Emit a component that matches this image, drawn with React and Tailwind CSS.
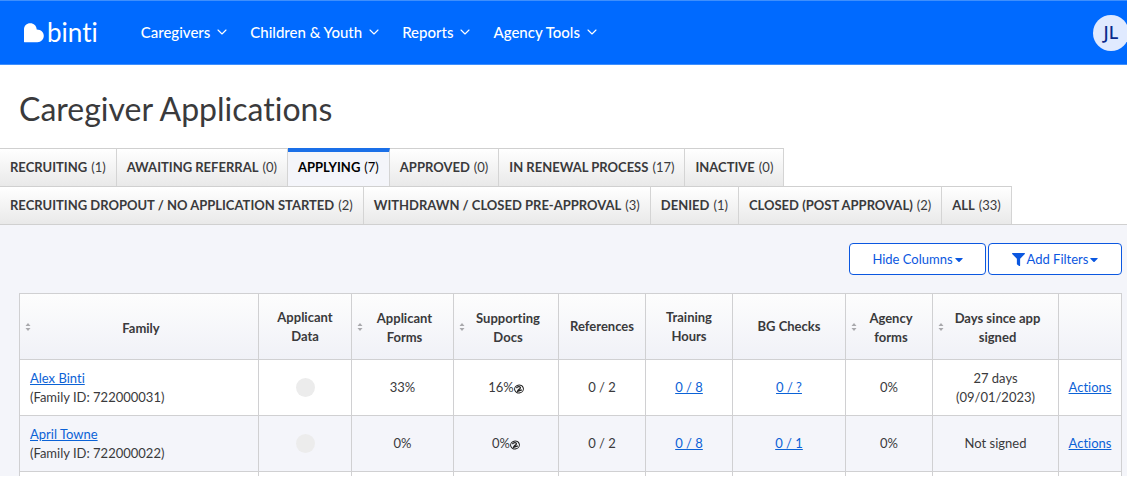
import { FaFilter, FaCaretDown } from 'react-icons/fa';

const navItems = ['Caregivers', 'Children & Youth', 'Reports', 'Agency Tools'];

const tabRows = [
  [
    { label: 'Recruiting', count: 1 },
    { label: 'Awaiting Referral', count: 0 },
    { label: 'Applying', count: 7, active: true },
    { label: 'Approved', count: 0 },
    { label: 'In Renewal Process', count: 17 },
    { label: 'Inactive', count: 0 },
  ],
  [
    { label: 'Recruiting Dropout / No Application Started', count: 2 },
    { label: 'Withdrawn / Closed Pre-Approval', count: 3 },
    { label: 'Denied', count: 1 },
    { label: 'Closed (Post Approval)', count: 2 },
    { label: 'All', count: 33 },
  ],
];

const columns = [
  { label: 'Family', width: 'w-auto', sortable: true },
  { label: 'Applicant Data', width: 'w-[93px]' },
  { label: 'Applicant Forms', width: 'w-[102px]', sortable: true },
  { label: 'Supporting Docs', width: 'w-[105px]', sortable: true },
  { label: 'References', width: 'w-[87px]' },
  { label: 'Training Hours', width: 'w-[87px]' },
  { label: 'BG Checks', width: 'w-[113px]' },
  { label: 'Agency forms', width: 'w-[87px]', sortable: true },
  { label: 'Days since app signed', width: 'w-[126px]', sortable: true },
  { label: '', width: 'w-[63px]' },
];

const families = [
  {
    id: '722000031',
    name: 'Alex Binti',
    forms: '33%',
    docs: '16%',
    references: '0 / 2',
    training: '0 / 8',
    checks: '0 / ?',
    agency: '0%',
    signed: ['27 days', '(09/01/2023)'],
  },
  {
    id: '722000022',
    name: 'April Towne',
    forms: '0%',
    docs: '0%',
    references: '0 / 2',
    training: '0 / 8',
    checks: '0 / 1',
    agency: '0%',
    signed: ['Not signed'],
  },
];

const Chevron = () => (
  <svg className="h-[6px] w-[10px]" viewBox="0 0 10 6" fill="none" stroke="currentColor" strokeWidth="1.1">
    <path d="M1 1L5 5L9 1" strokeLinecap="round" strokeLinejoin="round" />
  </svg>
);

const SortIcon = () => (
  <svg className="h-2 w-[6px] shrink-0 text-[#a9a9ad]" viewBox="0 0 6 8" fill="currentColor">
    <path d="M3 0L5.5 3H0.5Z M0.5 5H5.5L3 8Z" />
  </svg>
);

// Circled question mark lying on its side
const HelpIcon = () => (
  <svg className="mt-0.5 h-[10px] w-[10px] text-[#222]" viewBox="0 0 10 10" fill="none" stroke="currentColor">
    <ellipse cx="5" cy="5" rx="4.4" ry="3.9" strokeWidth="1" transform="rotate(-15 5 5)" />
    <path d="M2.4 4.2C3.6 2.4 6.6 2.2 6.4 3.8C6.2 5 4.4 5.2 3.4 7.4L7.8 5.8" strokeWidth="1.3" />
  </svg>
);

const Link = ({ children }) => (
  <a href="#" className="text-[#0b62d6] underline">
    {children}
  </a>
);

const Header = () => (
  <header className="flex h-[65px] shrink-0 items-center overflow-hidden border-y border-[#3f8ffc] bg-[#006aff] pl-6 text-white">
    <a href="#" className="flex items-center gap-[3px]">
      <svg className="h-5 w-5" viewBox="0 0 20 20" fill="currentColor">
        <path d="M0 19V6.5C0 2.8 2.7 0.3 6.2 0.3C9.8 0.3 12.5 2.8 12.7 6.4C16.7 6.3 19.8 9.1 19.8 12.8C19.8 16.4 17.2 19.2 13.4 19.2H0.5Z" />
      </svg>
      <span className="pb-0.5 text-[26px] leading-6">binti</span>
    </a>
    <nav className="ml-[43px] flex items-center gap-[23px]">
      {navItems.map((item) => (
        <button key={item} className="flex items-center gap-[7px] pb-0.5 text-[15px] leading-5 font-medium">
          {item}
          <Chevron />
        </button>
      ))}
    </nav>
    <button className="-mr-0.5 ml-auto h-9 w-9 shrink-0 rounded-full bg-[#e0eaff] pb-0.5 font-['Noto_Sans'] text-lg font-medium text-[#0a2a8c]">
      JL
    </button>
  </header>
);

const Tab = ({ label, count, active }) => (
  <a
    href="#"
    className={`flex h-[38px] items-center border-r border-r-[#d4d4d4] px-[10px] whitespace-nowrap ${
      active
        ? 'border-t-4 border-t-[#1a6fe8] bg-[#f4f5fa] pb-1 text-black'
        : 'border-t border-t-[#d0d0d0] bg-linear-to-b from-white to-[#e9e9e9] text-[#3a3a3c]'
    }`}
  >
    <span className="font-bold uppercase">{label}</span>
    <span className="ml-1">({count})</span>
  </a>
);

const App = () => {
  return (
    <div className="flex h-screen flex-col overflow-hidden border-b border-white bg-white font-['Lato',sans-serif] text-[13px] leading-[19px] text-[#3a3a3c] [font-variant-ligatures:none]">
      <Header />
      <h1 className="px-[19px] pt-6 pb-[19px] text-[32px] leading-10">Caregiver Applications</h1>

      <nav>
        {tabRows.map((row, i) => (
          <div key={i} className="flex">
            {row.map((tab) => (
              <Tab key={tab.label} {...tab} />
            ))}
          </div>
        ))}
      </nav>

      <main className="min-h-0 flex-1 overflow-hidden border-t border-[#d0d0d0] bg-[#f4f5fa] pt-[18px] pr-[5px] pl-[19px]">
        <div className="flex justify-end gap-0.5 text-[#0b57e0]">
          <button className="flex h-8 w-[137px] items-center justify-center gap-0.5 rounded border border-current bg-white">
            Hide Columns <FaCaretDown className="w-2" />
          </button>
          <button className="flex h-8 w-[134px] items-center justify-center gap-0.5 rounded border border-current bg-white">
            <FaFilter /> Add Filters <FaCaretDown className="w-2" />
          </button>
        </div>

        <table className="mt-[18px] w-full table-fixed border-collapse text-center">
          <thead>
            <tr className="h-[66px] bg-linear-to-b from-[#fdfdfd] to-[#f0f1f7]">
              {columns.map(({ label, width, sortable }) => (
                <th key={label} className={`border border-[#d0d0d2] p-0 font-bold ${width}`}>
                  {sortable ? (
                    <div className="flex items-center pr-[7px] pl-[5px]">
                      <SortIcon />
                      <span className="flex-1 px-1 pt-[3px]">{label}</span>
                    </div>
                  ) : (
                    <span className="block px-2">{label}</span>
                  )}
                </th>
              ))}
            </tr>
          </thead>
          <tbody>
            {families.map((family) => (
              <tr key={family.id} className="h-14 bg-white even:bg-[#f4f5fa] [&>td]:border [&>td]:border-[#d0d0d2]">
                <td className="px-[10px] text-left">
                  <Link>{family.name}</Link>
                  <div>(Family ID: {family.id})</div>
                </td>
                <td>
                  <div className="mx-auto h-[19px] w-[19px] rounded-full bg-[#ececec]" />
                </td>
                <td>{family.forms}</td>
                <td>
                  <div className="flex items-center justify-center">
                    {family.docs}
                    <HelpIcon />
                  </div>
                </td>
                <td>{family.references}</td>
                <td>
                  <Link>{family.training}</Link>
                </td>
                <td>
                  <Link>{family.checks}</Link>
                </td>
                <td>{family.agency}</td>
                <td>
                  {family.signed.map((line) => (
                    <div key={line}>{line}</div>
                  ))}
                </td>
                <td>
                  <Link>Actions</Link>
                </td>
              </tr>
            ))}
            <tr className="h-14 bg-white">
              {columns.map(({ label }) => (
                <td key={label} className="border border-[#d0d0d2]" />
              ))}
            </tr>
          </tbody>
        </table>
      </main>
    </div>
  );
};

export default App;
